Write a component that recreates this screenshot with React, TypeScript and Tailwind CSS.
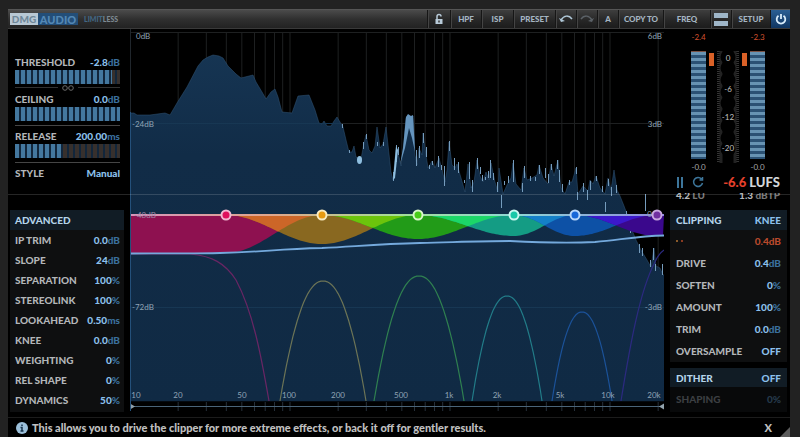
import type { ReactNode } from "react";

const LEFT = 130;
const TOP = 29;
const WIDTH = 534;
const HEIGHT = 383;
const px = (x: number) => `${((x - LEFT) / WIDTH) * 100}%`;
const py = (y: number) => `${((y - TOP) / HEIGHT) * 100}%`;
const freqX = (hz: number) => LEFT + 160 * Math.log10(hz / 10);

type Point = [number, number];
const toPath = (pts: Point[]) => "M" + pts.map(([x, y]) => `${x.toFixed(1)} ${y.toFixed(1)}`).join("L");

const GRID = [20, 30, 40, 50, 60, 70, 80, 90, 100, 200, 300, 400, 500, 600, 700, 800, 900, 1000, 2000, 3000, 4000, 5000, 6000, 7000, 8000, 9000, 10000, 20000];

const SPECTRUM: Point[] = [
  [130, 113], [134, 113], [137, 115], [150, 115], [165, 113], [170, 115], [177, 103], [187, 87], [198, 66], [203, 60], [208, 57], [213, 55], [219, 56], [223, 58],
  [228, 66], [236, 74], [241, 78], [253, 75], [256, 82], [262, 92], [266, 99], [271, 92], [275, 89], [278, 97], [282, 112], [292, 113], [298, 96], [309, 95], [315, 110],
  [319, 123], [322, 124], [324, 121], [327, 126], [331, 126], [334, 121], [337, 117], [343, 127], [346, 140], [349, 152], [352, 152], [354, 146], [356, 157], [361, 159],
  [364, 143], [366, 135], [369, 150], [372, 153], [375, 146], [377, 127], [380, 148], [383, 144], [386, 127], [388, 145], [391, 172], [393, 180], [396, 150], [398, 152], [401, 166], [404, 142],
  [406, 118], [408, 115], [411, 122], [413, 116], [415, 155], [417, 165], [419, 148], [422, 155], [423, 133], [426, 155], [428, 168], [432, 161], [435, 168], [439, 158],
  [442, 170], [445, 182], [447, 170], [449, 142], [452, 165], [455, 168], [457, 164], [461, 178], [465, 192], [468, 164], [471, 188], [474, 182], [477, 160], [480, 176], [483, 182],
  [486, 172], [489, 180], [491, 163], [495, 182], [498, 192], [499, 168], [503, 194], [507, 185], [511, 178], [513, 163], [516, 184], [521, 190], [524, 168], [527, 180], [532, 178], [537, 175],
  [539, 165], [543, 178], [548, 184], [551, 164], [554, 176], [558, 160], [561, 188], [565, 194], [569, 182], [572, 182], [576, 168], [578, 194], [583, 186], [588, 191], [590, 180], [593, 184],
  [596, 176], [600, 188], [605, 194], [608, 178], [611, 190], [614, 170], [617, 190], [620, 196], [624, 206], [627, 214], [632, 230], [636, 240], [641, 250], [647, 260], [651, 267], [654, 248], [656, 266], [660, 268], [663, 275], [664, 275],
];

// Bright transients drawn over the analyser fill: x, top, bottom.
const SPIKES: [number, number, number][] = [
  [342, 124, 128], [349, 150, 153], [363, 142, 149], [366, 134, 139], [377, 142, 146], [383, 142, 146], [393, 172, 181], [396, 145, 162], [398, 147, 155], [416, 150, 166], [419, 146, 158], [423, 133, 143],
  [426, 147, 157], [429, 165, 169], [432, 161, 165], [438, 156, 167], [441, 165, 170], [444, 166, 186], [449, 141, 151], [454, 158, 170], [458, 162, 173], [464, 180, 183], [469, 162, 179], [472, 180, 192],
  [477, 158, 169], [480, 167, 174], [482, 175, 181], [485, 177, 180], [488, 171, 178], [490, 160, 178], [493, 173, 180], [497, 182, 192], [501, 195, 208], [504, 181, 185], [508, 176, 183], [513, 160, 182],
  [522, 183, 192], [524, 166, 178], [530, 176, 181], [535, 177, 181], [539, 165, 174], [545, 168, 178], [548, 174, 183], [551, 164, 170], [557, 160, 169], [559, 170, 182], [562, 184, 192], [569, 180, 185],
  [576, 167, 174], [577, 192, 200], [583, 183, 192], [587, 190, 200], [590, 181, 190], [596, 176, 181], [602, 186, 192], [605, 202, 212], [608, 179, 186], [611, 187, 196], [616, 185, 193], [626, 211, 222],
  [630, 222, 233], [639, 244, 253], [642, 248, 256], [645, 194, 211], [650, 260, 267], [653, 248, 260], [655, 264, 271], [662, 264, 275],
];

type Band = { x: number; depth: number; fill: string; dot: string; ring: string };
const BANDS: Band[] = [
  { x: 226, depth: 38, fill: "#8e1150", dot: "bg-[#e0105c]", ring: "border-[#f2b8d0]" },
  { x: 322, depth: 29, fill: "#896820", dot: "bg-[#e89a10]", ring: "border-[#faecc0]" },
  { x: 418, depth: 24, fill: "#229b18", dot: "bg-[#48cc18]", ring: "border-[#d8f8c8]" },
  { x: 514, depth: 21, fill: "#149c84", dot: "bg-[#18c8a8]", ring: "border-[#c8f8f0]" },
  { x: 575, depth: 21, fill: "#0d51a6", dot: "bg-[#1868d8]", ring: "border-[#b8d8fa]" },
  { x: 657, depth: 21, fill: "#3a088c", dot: "bg-[#7030a0]", ring: "border-[#c8a8e0]" },
];
const OVERLAPS = ["#cc6628", "#6cc40c", "#1cd768", "#1480c8", "#3c18cc"];

const bandDepth = (i: number, x: number) => {
  const { x: cx, depth } = BANDS[i];
  const edge = x < cx ? BANDS[i - 1]?.x : BANDS[i + 1]?.x;
  if (edge === undefined) return depth;
  const t = Math.min(1, Math.abs((x - cx) / (edge - cx)));
  return depth * (0.5 + 0.5 * Math.cos(Math.PI * t));
};

const area = (from: number, to: number, f: (x: number) => number) => {
  const pts: Point[] = [[from, 215]];
  for (let x = from; x <= to; x += 2) pts.push([x, 215 + f(x)]);
  pts.push([to, 215]);
  return toPath(pts) + "Z";
};

const arch = (cx: number, peak: number, half: number) => {
  const pts: Point[] = [];
  for (let i = -20; i <= 20; i++) pts.push([cx + (i / 20) * half, peak + (401 - peak) * Math.pow(Math.abs(i) / 20, 2.15)]);
  return toPath(pts);
};

function Analyser() {
  return (
    <svg viewBox="130 29 534 383" preserveAspectRatio="none" className="absolute inset-0 h-full w-full" aria-hidden="true">
      <defs>
        <linearGradient id="spec" x1="0" y1="50" x2="0" y2="401" gradientUnits="userSpaceOnUse">
          <stop offset="0" stopColor="#163553" />
          <stop offset="0.3" stopColor="#112c47" />
          <stop offset="1" stopColor="#102a44" />
        </linearGradient>
        <linearGradient id="zero" x1="130" x2="664" y1="0" y2="0" gradientUnits="userSpaceOnUse">
          <stop offset="0" stopColor="#d894bc" />
          <stop offset="0.27" stopColor="#dfa78c" />
          <stop offset="0.5" stopColor="#a4de98" />
          <stop offset="0.72" stopColor="#8ed8d4" />
          <stop offset="1" stopColor="#8f88dc" />
        </linearGradient>
      </defs>
      <g stroke="#1e2021" strokeWidth="1">
        {GRID.map((hz) => <path key={hz} d={`M${freqX(hz)} 32V401`} />)}
        <path d="M130 32.5H664M130 123.5H664M130 215.5H664M130 307.5H664" />
      </g>
      <path d={toPath(SPECTRUM) + "V401H130Z"} fill="url(#spec)" />
      <path d={toPath(SPECTRUM)} fill="none" stroke="#315578" strokeWidth="1" opacity="0.5" />
      <path d="M130 123.5H340M130 307.5H664" stroke="#173753" strokeWidth="1" />
      <path d="M400 165L403 148 406 117 408 114 411 116 413 115 415 152 412 138 409 128 405 148Z" fill="#6595be" />
      <g fill="none" stroke="#759cbd" strokeWidth="1">
        {SPIKES.map(([x, a, b]) => <path key={x} d={`M${x + 0.5} ${a}V${b}`} />)}
      </g>
      <ellipse cx="359.500" cy="160" rx="2.500" ry="4" fill="#8fbfe0" />
      <path d="M396 146L398 150 395 178 393 180Z" fill="#8fbfe0" />
      {BANDS.map((b, i) => (
        <path key={b.x} fill={b.fill} d={area(BANDS[i - 1]?.x ?? 130, BANDS[i + 1]?.x ?? 664, (x) => bandDepth(i, x))} />
      ))}
      {OVERLAPS.map((c, i) => (
        <path key={c} fill={c} d={area(BANDS[i].x, BANDS[i + 1].x, (x) => Math.min(bandDepth(i, x), bandDepth(i + 1, x)))} />
      ))}
      <path d="M130 215H664" stroke="url(#zero)" strokeWidth="2" />
      <g fill="none" strokeWidth="1.200">
        <path d="M130 254H190C212 256 225 263 236 280C253 312 261 355 269 401" stroke="#692664" />
        <path d={arch(323, 281, 43)} stroke="#6c7456" />
        <path d={arch(419, 276, 45)} stroke="#2f8050" />
        <path d={arch(507, 296, 35)} stroke="#227c88" />
        <path d={arch(582, 312, 30)} stroke="#1b5299" />
        <path d="M621 401C630 345 640 290 655 262C658 255 661 252 664 250" stroke="#2c2a80" />
      </g>
      <path
        d="M130 253.500C160 253 190 254 220 253C265 252 275 249 322 248C360 246 380 244 420 243C460 242 480 241 510 241C550 243 570 243 595 242C625 239 640 236 664 235.500"
        fill="none" stroke="#74a9dc" strokeWidth="1.800"
      />
      <path d="M130 401.500H664" stroke="#050a10" />
      <g stroke="#26303a">{GRID.map((hz) => <path key={hz} d={`M${freqX(hz)} 402V411`} />)}</g>
      <path d="M130 406.500H664" stroke="#4a6478" />
      <path d="M130 403.500L135 406.500 130 409.500ZM664 403.500L659 406.500 664 409.500Z" fill="#92a2ac" />
      <path d="M130.500 112V411" stroke="#24507a" />
      <path d="M130.500 29V112" stroke="#20262c" />
    </svg>
  );
}

const FREQ_LABELS: [string, number][] = [["10", 136], ["20", 178], ["50", 242], ["100", 289], ["200", 338], ["500", 401], ["1k", 449], ["2k", 497], ["5k", 560], ["10k", 608], ["20k", 654]];
const DB_LEFT: [string, number][] = [["0dB", 36], ["-24dB", 124], ["-48dB", 215], ["-72dB", 307]];
const DB_RIGHT: [string, number][] = [["6dB", 36], ["3dB", 124], ["0", 214], ["-3dB", 307]];

function Graph() {
  return (
    <section aria-label="Spectrum" className="relative h-[383px] min-w-0 flex-1 overflow-hidden text-[8px] leading-none font-normal text-[#90a4b5]">
      <Analyser />
      {FREQ_LABELS.map(([t, x]) => (
        <span key={t} className="absolute -translate-x-1/2 -translate-y-1/2" style={{ left: px(x), top: py(395) }}>{t}</span>
      ))}
      {DB_LEFT.map(([t, y], i) => (
        <span key={t} className={`absolute -translate-y-1/2 ${i === 0 ? "left-1.5" : i === 2 ? "left-1 text-[#a08aa8]" : "left-0.5"}`} style={{ top: py(y) }}>{t}</span>
      ))}
      {DB_RIGHT.map(([t, y], i) => (
        <span key={t} className={`absolute -translate-y-1/2 ${i === 2 ? "right-3" : "right-0.5"}`} style={{ top: py(y) }}>{t}</span>
      ))}
      {BANDS.map((b, i) => (
        <button
          key={b.x}
          aria-label={`Band ${i + 1}`}
          className={`absolute size-[11px] -translate-x-1/2 -translate-y-1/2 rounded-full border-2 ${b.dot} ${b.ring}`}
          style={{ left: px(b.x), top: py(215) }}
        />
      ))}
    </section>
  );
}

function Value({ children, unit }: { children: ReactNode; unit?: string }) {
  return (
    <span className="text-[#8cc0ec]">
      {children}
      {unit && <span className="text-[#3b6f9d]">{unit}</span>}
    </span>
  );
}

function Slider({ id, label, value, unit, fill }: { id: string; label: string; value: string; unit: string; fill: number }) {
  return (
    <div>
      <div className="flex h-4 items-center justify-between">
        <label htmlFor={id}>{label}</label>
        <Value unit={unit}>{value}</Value>
      </div>
      <input
        id={id}
        type="range"
        defaultValue={fill}
        className="block h-[14px] w-full appearance-none [&::-webkit-slider-thumb]:opacity-0"
        style={{
          backgroundImage: `repeating-linear-gradient(90deg, transparent 0 4px, #12263b 4px 6px), linear-gradient(90deg, #44789f ${fill}%, #37302d ${fill}%)`,
        }}
      />
    </div>
  );
}

function Row({ label, value, unit, height }: { label: string; value: string; unit?: string; height: string }) {
  return (
    <div className={`flex items-center justify-between ${height}`}>
      <dt>{label}</dt>
      <dd><Value unit={unit}>{value}</Value></dd>
    </div>
  );
}

const ADVANCED: [string, string, string][] = [
  ["IP TRIM", "0.0", "dB"], ["SLOPE", "24", "dB"], ["SEPARATION", "100", "%"], ["STEREOLINK", "100", "%"], ["LOOKAHEAD", "0.50", "ms"],
  ["KNEE", "0.0", "dB"], ["WEIGHTING", "0", "%"], ["REL SHAPE", "0", "%"], ["DYNAMICS", "50", "%"],
];

function LeftColumn() {
  return (
    <aside className="flex w-[122px] shrink-0 flex-col pr-1.5">
      <div className="h-[181px] pt-[25px] pr-1 pl-[7px]">
        <Slider id="threshold" label="THRESHOLD" value="-2.8" unit="dB" fill={92} />
        <div className="flex h-[7px] items-center gap-1">
          <span className="h-px flex-1 bg-[#333]" />
          <svg viewBox="0 0 12 6" className="h-1.5 w-3" fill="none" stroke="#6c6c6c"><circle cx="3" cy="3" r="2.300" /><circle cx="9" cy="3" r="2.300" /></svg>
          <span className="h-px flex-1 bg-[#333]" />
        </div>
        <Slider id="ceiling" label="CEILING" value="0.0" unit="dB" fill={100} />
        <div className="mt-1 mb-0.5 h-px bg-[#454545]" />
        <Slider id="release" label="RELEASE" value="200.00" unit="ms" fill={46} />
        <div className="mt-1 mb-0.5 h-px bg-[#454545]" />
        <div className="flex h-4 items-center justify-between">
          <span>STYLE</span>
          <button className="text-[#8cc0ec]">Manual</button>
        </div>
      </div>
      <section className="ml-0.5 h-[202px] bg-[#0e0f10]">
        <h2 className="flex h-5 items-center bg-[#111c25] px-[5px] text-[#b5d4ea]">ADVANCED</h2>
        <dl className="pr-1 pl-[5px]">
          {ADVANCED.map(([l, v, u]) => <Row key={l} label={l} value={v} unit={u} height="h-5" />)}
        </dl>
      </section>
    </aside>
  );
}

const CLIPPING: [string, string, string?][] = [["DRIVE", "0.4", "dB"], ["SOFTEN", "0", "%"], ["AMOUNT", "100", "%"], ["TRIM", "0.0", "dB"], ["OVERSAMPLE", "OFF"]];

function LevelMeter({ peak }: { peak: string }) {
  return (
    <div className="flex w-[15px] flex-col items-center">
      <span className="flex h-4 items-center text-[8px] font-normal text-[#d4512f]">{peak}</span>
      <div className="mt-1.5 h-[108px] w-full border-t border-[#7a5144] bg-[repeating-linear-gradient(180deg,#6793b3_0_3px,#2b5174_3px_6px)]" />
      <span className="flex h-4 items-center text-[8px] font-normal text-[#a8a8a8]">-0.0</span>
    </div>
  );
}

// Scale between the two meters: ticked rails with a dark bead chain for the numbers.
function MeterScale() {
  const beads = [6, 17, 29, 41, 52, 64, 75, 87, 98];
  return (
    <div className="relative mt-[22px] h-[112px] w-[22px] text-[8px] leading-none font-normal text-[#c0c0c0]">
      <svg viewBox="0 0 22 112" className="absolute inset-0 h-full w-full" aria-hidden="true">
        <path d="M2.500 0V112M19.500 0V112" stroke="#343434" strokeWidth="5" strokeDasharray="1 1" />
        <path d="M4 0V112M18 0V112" stroke="#222" strokeWidth="3" />
        {beads.map((y) => <circle key={y} cx="11" cy={y} r="7.500" fill="#000" />)}
      </svg>
      {[["0", "6%"], ["-6", "34%"], ["-12", "59%"], ["-20", "87%"]].map(([t, top]) => (
        <span key={t} className="absolute left-1/2 -translate-x-1/2 -translate-y-1/2" style={{ top }}>{t}</span>
      ))}
    </div>
  );
}

function RightColumn() {
  return (
    <aside className="flex w-[126px] shrink-0 flex-col pr-[3px] pl-1.5">
      <div className="h-[181px]">
        <div className="flex justify-center gap-[3px] pr-px">
          <LevelMeter peak="-2.4" />
          <div className="mt-6 h-[13px] w-[5px] bg-[#da6127]" />
          <MeterScale />
          <div className="mt-6 h-[13px] w-[5px] bg-[#da6127]" />
          <LevelMeter peak="-2.3" />
        </div>
        <div className="flex h-[14px] items-center pr-[7px] pl-1.5">
          <button aria-label="Pause" className="mr-2">
            <svg viewBox="0 0 8 11" className="h-[11px] w-2" stroke="#3d769b" strokeWidth="2"><path d="M2 0V11M6 0V11" /></svg>
          </button>
          <button aria-label="Reset">
            <svg viewBox="0 0 12 12" className="size-[12px]" fill="none" stroke="#3d769b" strokeWidth="1.500"><path d="M9.500 3A4.500 4.500 0 1 0 10.500 7M10.500 1V4H7.500" /></svg>
          </button>
          <span className="ml-auto text-[13px] leading-none"><span className="text-[#e5412c]">-6.6</span> <span className="text-[#d2d6da]">LUFS</span></span>
        </div>
        <div className="mt-1 flex h-[7px] items-end justify-between overflow-hidden pr-[7px] pl-1.5 leading-[9px]">
          <span>4.2 <span className="text-[#777]">LU</span></span>
          <span>1.3 <span className="text-[#777]">dBTP</span></span>
        </div>
      </div>
      <section className="h-[152px] bg-[#0e0f10]">
        <div className="flex h-5 items-center justify-between bg-[#111c25] px-1.5 text-[#b5d4ea]">
          <h2>CLIPPING</h2>
          <button className="text-[#8cc0ec]">KNEE</button>
        </div>
        <div className="flex h-[22px] items-center justify-between px-1.5 text-[#b8492c]">
          <span className="flex gap-[3px]"><i className="size-0.5 bg-[#8a5a2a]" /><i className="size-0.5 bg-[#8a3a20]" /></span>
          <span>0.4dB</span>
        </div>
        <dl className="px-1.5">
          {CLIPPING.map(([l, v, u]) => <Row key={l} label={l} value={v} unit={u} height="h-[22px]" />)}
        </dl>
      </section>
      <section className="mt-1.5 h-11 bg-[#08090a]">
        <div className="flex h-[19px] items-center justify-between bg-[#111c25] px-1.5 text-[#b5d4ea]">
          <h2>DITHER</h2>
          <button className="text-[#8cc0ec]">OFF</button>
        </div>
        <div className="flex h-6 items-center justify-between px-1.5 text-[#3c3f42]">
          <span>SHAPING</span>
          <span className="text-[#25394a]">0%</span>
        </div>
      </section>
    </aside>
  );
}

function BarButton({ width, label, children, active }: { width: string; label?: string; children: ReactNode; active?: boolean }) {
  return (
    <button
      aria-label={label}
      className={`flex items-center justify-center border-l border-[#161616] ${width} ${active ? "bg-[linear-gradient(#2a5f94,#0f3561)]" : "bg-[linear-gradient(#3e3e3e,#262626_60%,#1c1c1c)] shadow-[inset_1px_0_#444]"}`}
    >
      {children}
    </button>
  );
}

function Header() {
  return (
    <header className="flex h-[19px] items-stretch border-t border-[#555] bg-[linear-gradient(#4b4b4b,#303030_50%,#222)] text-[8px] text-[#a5b5c2]">
      <div className="flex flex-1 items-center pl-0.5">
        <span className="flex h-3 w-7 items-center justify-center bg-[#b8c8d4] text-[10px] text-[#6f8799]">DMG</span>
        <span className="flex h-3 w-10 items-center justify-center bg-[#234e78] text-[11px] text-[#5488b5]">AUDIO</span>
        <span className="ml-1.5 text-[7px] text-[#426784]">LIMIT<span className="text-[#7d8992]">LESS</span></span>
      </div>
      <BarButton width="w-[23px]" label="Lock">
        <svg viewBox="0 0 10 12" className="h-3 w-2.5" fill="none" stroke="#b8cad8" strokeWidth="1.500">
          <path d="M3 6V3.500A2 2 0 0 1 7 3.500" /><path d="M1.500 6H8.500V11H1.500Z" fill="#b8cad8" stroke="none" /><path d="M5 7.500V9.500" stroke="#333" />
        </svg>
      </BarButton>
      <BarButton width="w-[31px]">HPF</BarButton>
      <BarButton width="w-8">ISP</BarButton>
      <BarButton width="w-[42px]">PRESET</BarButton>
      <BarButton width="w-[21px]" label="Undo">
        <svg viewBox="0 0 14 10" className="h-2.5 w-3.5" fill="none" stroke="#b0c8d8" strokeWidth="1.500"><path d="M2 6C5 1 10 1 13 5" /><path d="M0 4L2 8 6 7Z" fill="#b0c8d8" stroke="none" /></svg>
      </BarButton>
      <BarButton width="w-[21px]" label="Redo">
        <svg viewBox="0 0 14 10" className="h-2.5 w-3.5" fill="none" stroke="#5b6167" strokeWidth="1.500"><path d="M12 6C9 1 4 1 1 5" /><path d="M14 4L12 8 8 7Z" fill="#5b6167" stroke="none" /></svg>
      </BarButton>
      <BarButton width="w-[21px]">A</BarButton>
      <BarButton width="w-[45px]">COPY TO</BarButton>
      <BarButton width="w-[47px]">FREQ</BarButton>
      <BarButton width="w-[21px]" label="View">
        <span className="flex flex-col gap-[3px]"><i className="h-[5px] w-3.5 bg-[#9fb6c8]" /><i className="h-[5px] w-3.5 bg-[#9fb6c8]" /></span>
      </BarButton>
      <BarButton width="w-[39px]">SETUP</BarButton>
      <BarButton width="w-5" label="Power" active>
        <svg viewBox="0 0 12 12" className="size-3" fill="none" stroke="#d8ecfa" strokeWidth="1.800"><path d="M3.500 2.800A4.300 4.300 0 1 0 8.500 2.800M6 1V6" /></svg>
      </BarButton>
    </header>
  );
}

export default function App() {
  return (
    <div className="min-h-screen bg-[#222] pt-[9px] pr-2.5 pl-2 font-['Lato',sans-serif] text-[10px] font-black text-[#b3b6b9]">
      <main className="relative bg-black leading-none">
        <Header />
        <div className="flex border-t border-[#3a3a3a]">
          <LeftColumn />
          <Graph />
          <RightColumn />
        </div>
        <footer className="mt-[5px] flex h-5 items-center border-t border-[#1c1c1c] pl-2 text-[11px] text-[#c0c0c0]">
          <svg viewBox="0 0 12 12" className="mr-1 size-3" aria-hidden="true">
            <circle cx="6" cy="6" r="6" fill="#9cc0da" /><path d="M6 2.500V4M4.500 5.500H6V9M4.500 9H7.500" stroke="#16324c" strokeWidth="1.500" fill="none" />
          </svg>
          <p className="flex-1">This allows you to drive the clipper for more extreme effects, or back it off for gentler results.</p>
          <button aria-label="Close" className="mr-2">X</button>
          <svg viewBox="0 0 10 10" className="size-2.5 self-end" aria-hidden="true"><path d="M10 0V10H0Z" fill="#5c5c5c" /></svg>
        </footer>
        <div className="pointer-events-none absolute inset-x-0 top-[185px] h-px bg-white/15" />
      </main>
    </div>
  );
}
